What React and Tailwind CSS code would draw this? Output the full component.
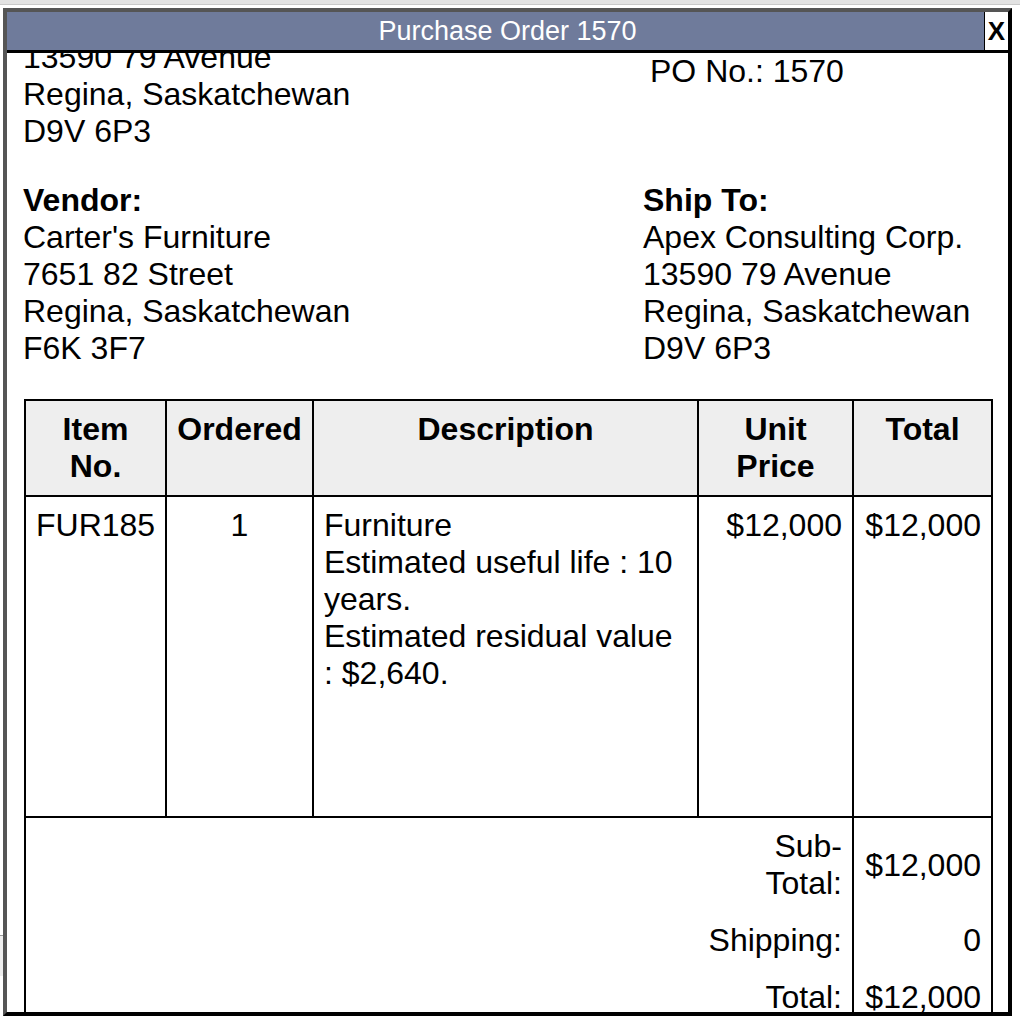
const font = { fontFamily: '"Liberation Sans", Arial, Helvetica, sans-serif' };

const Lines = ({ lines, bold }) => (
  <div>
    {bold && <div className="font-bold">{bold}</div>}
    {lines.map((l) => (
      <div key={l}>{l}</div>
    ))}
  </div>
);

export default function App() {
  return (
    <div className="relative w-[1020px] h-[1026px] bg-white overflow-hidden" style={font}>
      {/* page behind the popup */}
      <div className="h-[5px] bg-[#e2e2e2] border-b border-[#c9c9c9]" />
      <div className="mt-[930px] w-[3px] h-[41px] bg-[#eeeeee] border-t border-[#9a9a9a]" />

      {/* popup window */}
      <div className="absolute left-[3px] top-[8px] w-[1009px] h-[1008px] flex flex-col bg-white border-4 border-t-[#555555] border-l-[#555555] border-r-black border-b-black">
        <div className="relative h-[41px] shrink-0 bg-[#6f7b9b] border-b-[3px] border-black">
          <div className="text-center text-white text-[27px] leading-[38px]">Purchase Order 1570</div>
          <button className="absolute right-0 top-0 w-[24px] h-[38px] bg-white border-l border-black font-bold text-[26px] leading-[38px] text-black text-center">
            X
          </button>
        </div>

        <div className="flex-1 overflow-hidden">
          <div className="-mt-[51px] pl-[16px] text-[32px] leading-[37px] text-black">
            <div className="grid grid-cols-[620px_1fr]">
              <Lines lines={['Apex Consulting Corp.', '13590 79 Avenue', 'Regina, Saskatchewan', 'D9V 6P3']} />
              <div className="pt-[51px] pl-[7px]">PO No.: 1570</div>
            </div>

            <div className="grid grid-cols-[620px_1fr] mt-[32px]">
              <Lines bold="Vendor:" lines={["Carter's Furniture", '7651 82 Street', 'Regina, Saskatchewan', 'F6K 3F7']} />
              <Lines bold="Ship To:" lines={['Apex Consulting Corp.', '13590 79 Avenue', 'Regina, Saskatchewan', 'D9V 6P3']} />
            </div>

            <table className="mt-[32px] ml-[1px] w-[967px] table-fixed border-collapse border-2 border-black">
              <colgroup>
                <col className="w-[141px]" />
                <col className="w-[147px]" />
                <col className="w-[385px]" />
                <col className="w-[155px]" />
                <col className="w-[139px]" />
              </colgroup>
              <thead>
                <tr className="bg-[#eeeeee] align-top">
                  <th className="border-2 border-black px-[10px] py-[10px] text-center font-bold">Item No.</th>
                  <th className="border-2 border-black px-[6px] py-[10px] text-center font-bold whitespace-nowrap">Ordered</th>
                  <th className="border-2 border-black px-[10px] py-[10px] text-center font-bold">Description</th>
                  <th className="border-2 border-black px-[10px] py-[10px] text-center font-bold">Unit Price</th>
                  <th className="border-2 border-black px-[10px] py-[10px] text-center font-bold">Total</th>
                </tr>
              </thead>
              <tbody>
                <tr className="align-top h-[321px]">
                  <td className="border-2 border-black px-[10px] py-[10px]">FUR185</td>
                  <td className="border-2 border-black px-[10px] py-[10px] text-center">1</td>
                  <td className="border-2 border-black px-[10px] py-[10px]">
                    Furniture
                    <br />
                    Estimated useful life : 10 years.
                    <br />
                    Estimated residual value : $2,640.
                  </td>
                  <td className="border-2 border-black px-[10px] py-[10px] text-right whitespace-nowrap">$12,000</td>
                  <td className="border-2 border-black px-[10px] py-[10px] text-right whitespace-nowrap">$12,000</td>
                </tr>
                <tr>
                  <td colSpan={3} className="border-t-2 border-black" />
                  <td className="border-t-2 border-black px-[10px] py-[10px] text-right">
                    Sub-
                    <br />
                    Total:
                  </td>
                  <td className="border-t-2 border-l-2 border-black px-[10px] py-[10px] text-right whitespace-nowrap">$12,000</td>
                </tr>
                <tr>
                  <td colSpan={3} />
                  <td className="px-[10px] py-[10px] text-right whitespace-nowrap">Shipping:</td>
                  <td className="border-l-2 border-black px-[10px] py-[10px] text-right">0</td>
                </tr>
                <tr>
                  <td colSpan={3} />
                  <td className="px-[10px] py-[10px] text-right whitespace-nowrap">Total:</td>
                  <td className="border-l-2 border-black px-[10px] py-[10px] text-right whitespace-nowrap">$12,000</td>
                </tr>
              </tbody>
            </table>
          </div>
        </div>
      </div>
    </div>
  );
}
